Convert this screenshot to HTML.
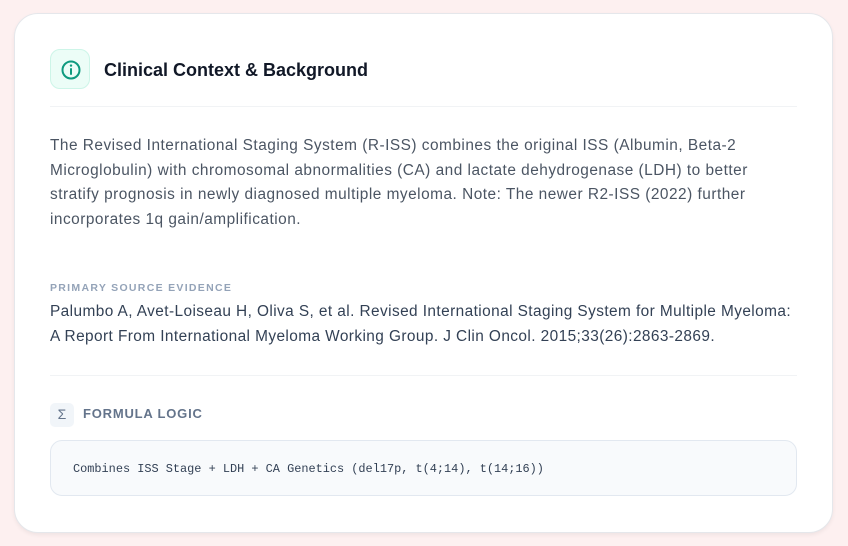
<!DOCTYPE html>
<html><head><style>
*{margin:0;padding:0;box-sizing:border-box}
body{width:848px;height:546px;background:#fdf0f0;font-family:"Liberation Sans","DejaVu Sans",sans-serif;position:relative;overflow:hidden}
.card{position:absolute;left:14px;top:13px;width:819px;height:520px;background:#fff;border-radius:24px;border:1px solid #e5e7eb;box-shadow:0 2px 4px rgba(0,0,0,0.06)}
.ib{position:absolute;left:35px;top:35px;width:40px;height:40px;border-radius:10px;background:#ecfdf7;border:1px solid #cdf5e8}
.title{position:absolute;left:89px;top:46px;font-size:18px;font-weight:bold;color:#111827}
.hr{position:absolute;left:35px;width:747px;height:1px;background:#f1f3f5}
.p{position:absolute;left:35px;top:120px;width:790px;font-size:15.4px;line-height:24.6px;color:#4b5563;white-space:nowrap;letter-spacing:0.5px}
.lab{position:absolute;left:35px;top:268px;font-size:10.5px;font-weight:bold;letter-spacing:1.3px;color:#94a3b8}
.cit{position:absolute;left:35px;top:286px;width:790px;font-size:15.4px;line-height:24.5px;color:#334155;white-space:nowrap;letter-spacing:0.42px}
.sb{position:absolute;left:35px;top:389px;width:24px;height:24px;border-radius:5px;background:#f1f5f9;color:#64748b;font-size:14px;text-align:center;line-height:22px}
.fl{position:absolute;left:68px;top:392px;font-size:13px;font-weight:bold;letter-spacing:.8px;color:#64748b}
.code{position:absolute;left:35px;top:426px;width:747px;height:56px;border-radius:12px;background:#f8fafc;border:1px solid #e2e8f0;font-family:"Liberation Mono","DejaVu Sans Mono",monospace;font-size:11.9px;color:#334155;padding-left:22px;line-height:56px}
</style></head><body>
<div class="card">
<div class="ib"><svg width="40" height="40" viewBox="0 0 40 40"><circle cx="20" cy="20" r="8.5" fill="none" stroke="#0f9a7f" stroke-width="2"/><line x1="20" y1="19" x2="20" y2="24" stroke="#0f9a7f" stroke-width="2" stroke-linecap="round"/><circle cx="20" cy="15.6" r="1.2" fill="#0f9a7f"/></svg></div>
<div class="title">Clinical Context &amp; Background</div>
<div class="hr" style="top:92px"></div>
<div class="p">The Revised International Staging System (R-ISS) combines the original ISS (Albumin, Beta-2<br>Microglobulin) with chromosomal abnormalities (CA) and lactate dehydrogenase (LDH) to better<br>stratify prognosis in newly diagnosed multiple myeloma. Note: The newer R2-ISS (2022) further<br>incorporates 1q gain/amplification.</div>
<div class="lab">PRIMARY SOURCE EVIDENCE</div>
<div class="cit">Palumbo A, Avet-Loiseau H, Oliva S, et al. Revised International Staging System for Multiple Myeloma:<br>A Report From International Myeloma Working Group. J Clin Oncol. 2015;33(26):2863-2869.</div>
<div class="hr" style="top:361px"></div>
<div class="sb">Σ</div>
<div class="fl">FORMULA LOGIC</div>
<div class="code">Combines ISS Stage + LDH + CA Genetics (del17p, t(4;14), t(14;16))</div>
</div>
</body></html>
